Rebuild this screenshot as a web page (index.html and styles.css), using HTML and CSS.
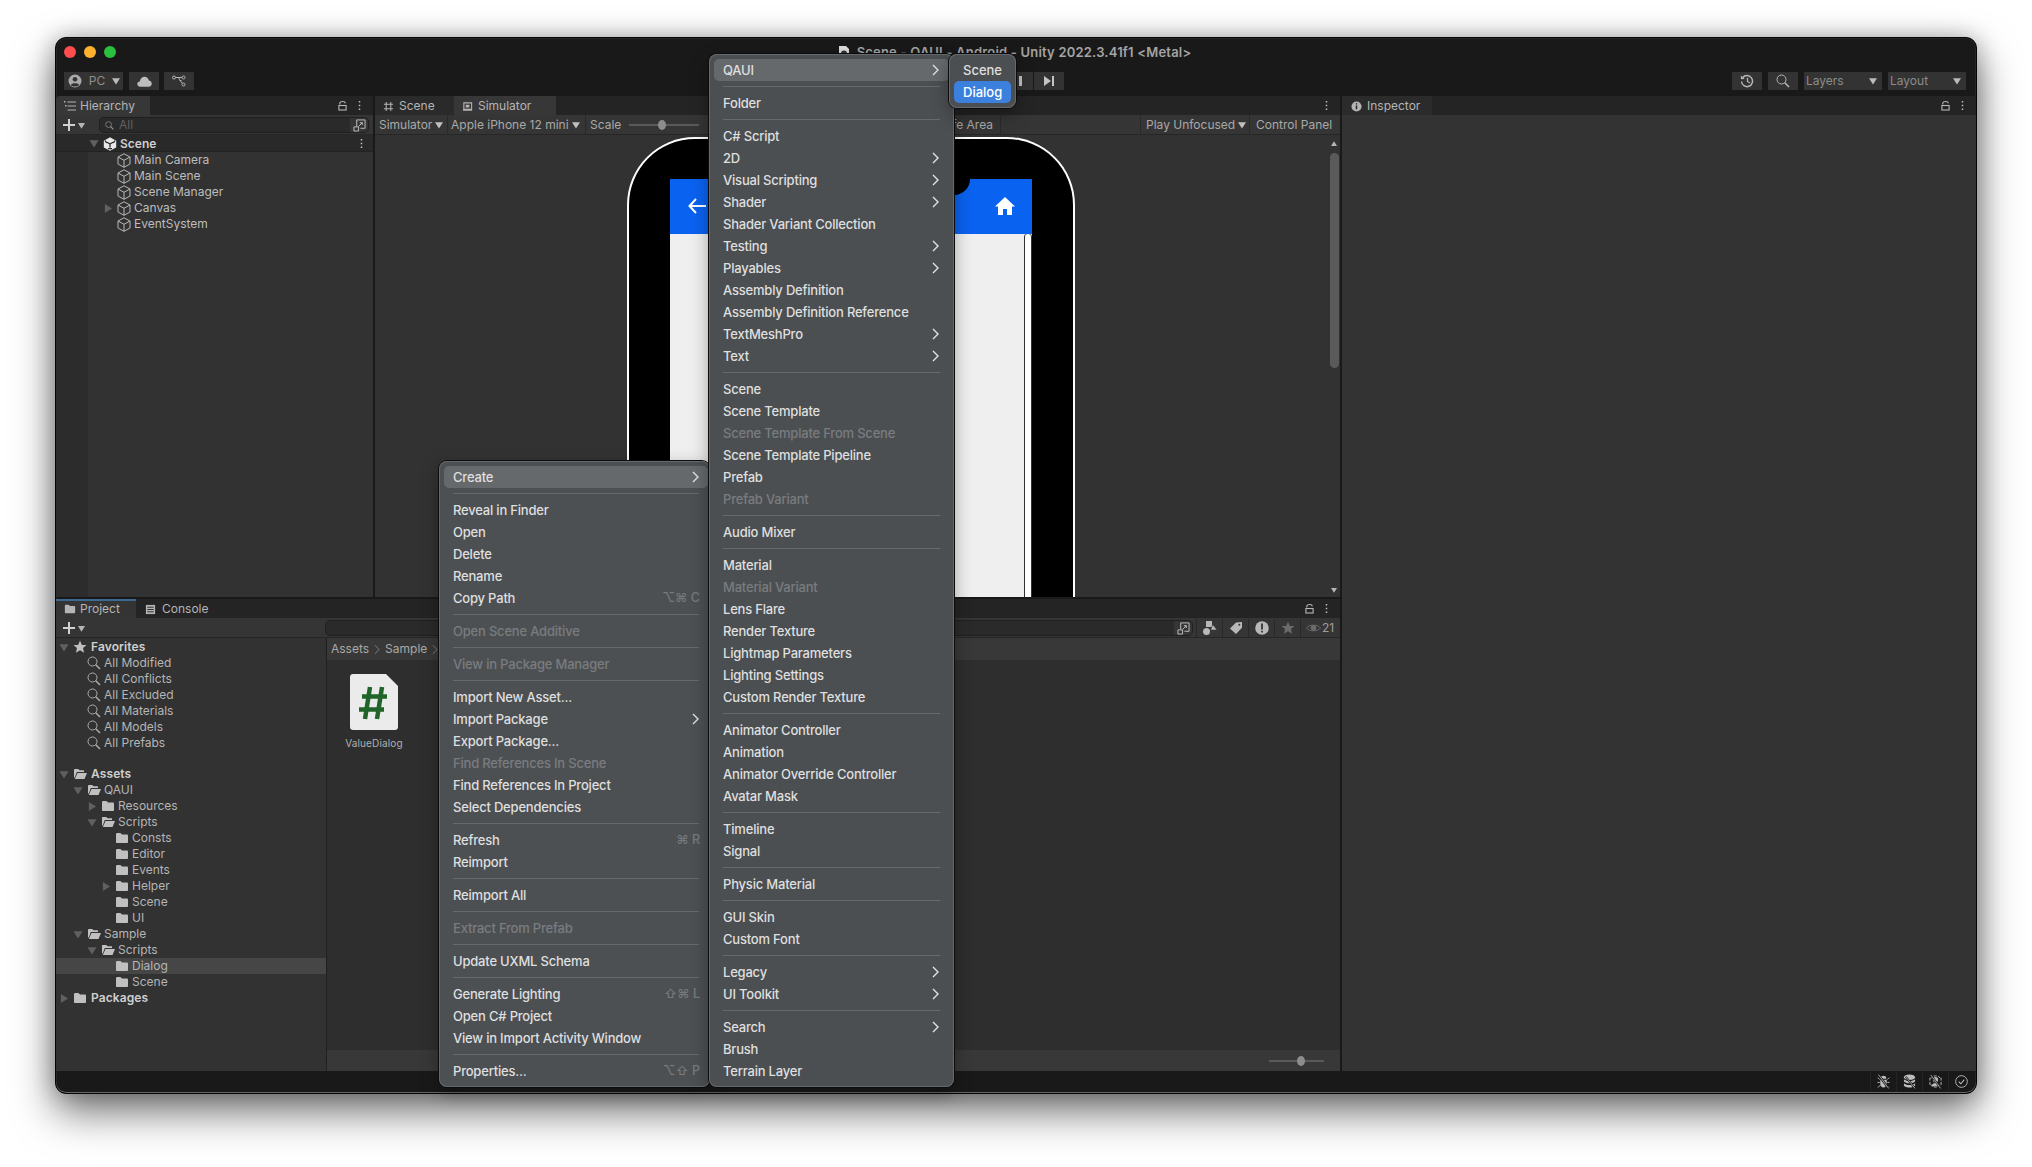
FILE: index.html
```html
<!DOCTYPE html>
<html lang="en">
<head>
<meta charset="utf-8">
<title>Unity</title>
<link rel="stylesheet" href="styles.css">
</head>
<body>
<svg class="defs" aria-hidden="true">
  <symbol id="cube" viewBox="0 0 14 15"><path d="M7 .8 13 4v7l-6 3.3L1 11V4zM1 4l6 3.3L13 4M7 7.3v7" fill="none" stroke="currentColor"/></symbol>
  <symbol id="unity" viewBox="0 0 14 14"><path d="M7 .3 13.2 3.8v6.6L7 13.8.8 10.4V3.8z" fill="currentColor"/><path d="M7 7V10.5M7 7 4 5.2M7 7l3-1.8M2.2 3.6 3.6 6M11.8 3.6 10.4 6M5 11.6h4" stroke="#2a2a2a" stroke-width="1.3" fill="none"/></symbol>
  <symbol id="folder" viewBox="0 0 14 14"><path d="M1 3.3C1 2.6 1.5 2 2.2 2H5.400L7 3.500H11.800C12.500 3.500 13 4 13 4.700V11C13 11.600 12.500 12 12 12H2C1.400 12 1 11.600 1 11z" fill="currentColor"/></symbol>
  <symbol id="folder-open" viewBox="0 0 14 14"><path d="M1 3C1 2.400 1.400 2 2 2H5.200L6.600 3.200H11V5H3.800L1.800 10.500 1 10.500z" fill="currentColor"/><path d="M4.500 6H14L11.500 12H1.800z" fill="currentColor"/></symbol>
  <symbol id="search" viewBox="0 0 14 14"><circle cx="5.500" cy="5.500" r="4.500" fill="none" stroke="currentColor"/><path d="M8.800 8.800 13 13" stroke="currentColor" stroke-width="1.600"/></symbol>
  <symbol id="tri-d" viewBox="0 0 10 10"><path d="M0 1.500h10L5 9.500z" fill="currentColor"/></symbol>
  <symbol id="tri-r" viewBox="0 0 10 10"><path d="M1.500 0v10l8-5z" fill="currentColor"/></symbol>
  <symbol id="star" viewBox="0 0 14 14"><path d="M7 .8 8.900 5h4.600L10 8l1.100 4.800L7 10.300l-4.100 2.500L4 8 .5 5h4.600z" fill="currentColor"/></symbol>
  <symbol id="plus" viewBox="0 0 12 12"><path d="M6 0v12M0 6h12" stroke="currentColor" stroke-width="2"/></symbol>
  <symbol id="lock" viewBox="0 0 10 12"><path d="M2 5V3.500C2 1 8 1 8 3.500" fill="none" stroke="currentColor" stroke-width="1.200"/><rect x="1" y="6" width="8" height="5" fill="none" stroke="currentColor" stroke-width="1.200"/></symbol>
  <symbol id="dots" viewBox="0 0 4 12"><path d="M1 0h2v2H1zM1 5h2v2H1zM1 10h2v2H1z" fill="currentColor"/></symbol>
  <symbol id="list" viewBox="0 0 14 12"><path d="M4.500 2H13M4.500 6H13M4.500 10H13" stroke="currentColor"/><path d="M1 1h1.500v1.500H1zM2 5h1.500v1.500H2z" fill="currentColor"/></symbol>
  <symbol id="hash" viewBox="0 0 12 12"><path d="M3.500 1v10M8.500 1v10M1 3.500h10M1 8.500h10" stroke="currentColor" stroke-width="1.100"/></symbol>
  <symbol id="phone" viewBox="0 0 12 12"><path d="M2 2h8.500v7H2zM1 10h10" fill="none" stroke="currentColor" stroke-width="1.200"/><path d="M4 4h4v3H4z" fill="currentColor"/></symbol>
  <symbol id="console" viewBox="0 0 12 12"><path d="M1 1h10v10H1z" fill="currentColor"/><path d="M2.500 3.500h7M2.500 6h7M2.500 8.500h7" stroke="#232323"/></symbol>
  <symbol id="info" viewBox="0 0 12 12"><circle cx="6" cy="6" r="5.500" fill="currentColor"/><path d="M6 5v4M6 2.500v1.300" stroke="#252525" stroke-width="1.600"/></symbol>
  <symbol id="expand" viewBox="0 0 14 14"><path d="M4 8V1h9v9H8" fill="none" stroke="currentColor"/><path d="M1 8.500h5v4.500H1z" fill="none" stroke="currentColor"/><path d="M6 8 10 4M7.500 4H10v2.500" fill="none" stroke="currentColor"/></symbol>
  <symbol id="user" viewBox="0 0 14 14"><circle cx="7" cy="7" r="6.500" fill="currentColor"/><circle cx="7" cy="5.300" r="2.300" fill="#333"/><path d="M2.800 11C3.500 8.600 10.500 8.600 11.200 11 9 13 5 13 2.800 11z" fill="#333"/></symbol>
  <symbol id="cloud" viewBox="0 0 16 11"><path d="M3.500 11C1.500 11 .3 9.700.3 8.200.3 6.600 1.500 5.600 3 5.500 3.500 2.500 5.500.5 8 .5c2.600 0 4.300 1.900 4.600 4 1.900 0 3.100 1.600 3.100 3.300 0 1.700-1.300 3.200-3.200 3.200z" fill="currentColor"/></symbol>
  <symbol id="graph" viewBox="0 0 14 12"><circle cx="2" cy="2.500" r="1.500" fill="none" stroke="currentColor"/><circle cx="11.500" cy="2.500" r="1.500" fill="none" stroke="currentColor"/><circle cx="11.500" cy="9.500" r="1.500" fill="none" stroke="currentColor"/><path d="M3.500 2.500 6 2.500C7 2.500 7.500 5 8 5.500H9.500M5.500 2.500h4.500M8 5.500l2.500 3" fill="none" stroke="currentColor"/></symbol>
  <symbol id="history" viewBox="0 0 14 14"><path d="M2.600 3.800A5.500 5.500 0 1 1 1.500 7.500" fill="none" stroke="currentColor" stroke-width="1.500"/><path d="M.8 1.500 1 5.300 4.800 5z" fill="currentColor"/><path d="M7.500 3.800v3.700l2.500 1.500" fill="none" stroke="currentColor" stroke-width="1.300"/></symbol>
  <symbol id="step" viewBox="0 0 12 10"><path d="M1 0v10l7-5zM9 0h2v10H9z" fill="currentColor"/></symbol>
  <symbol id="play" viewBox="0 0 12 10"><path d="M2 0v10l8-5z" fill="currentColor"/></symbol>
  <symbol id="pause" viewBox="0 0 12 10"><path d="M2 0h3v10H2zM7 0h3v10H7z" fill="currentColor"/></symbol>
  <symbol id="chev" viewBox="0 0 7 12"><path d="M1 1l5 5-5 5" fill="none" stroke="currentColor" stroke-width="1.400"/></symbol>
  <symbol id="crumb" viewBox="0 0 7 12"><path d="M1 1l5 5-5 5" fill="none" stroke="currentColor" stroke-width="1"/></symbol>
  <symbol id="types" viewBox="0 0 14 14"><path d="M3 0h6v6H3z" fill="currentColor"/><circle cx="3.500" cy="10.500" r="3.500" fill="currentColor"/><path d="M9.800 3.500 14 9H7.600z" fill="currentColor" stroke="#353535" stroke-width=".6"/></symbol>
  <symbol id="tag" viewBox="0 0 14 14"><path d="M1 7.500 7 1.500 13 1v5.800L7 13z" fill="currentColor"/><circle cx="10.300" cy="3.800" r="1" fill="#353535"/></symbol>
  <symbol id="warn" viewBox="0 0 14 14"><circle cx="7" cy="7" r="6.800" fill="currentColor"/><path d="M7 2.500v6M7 9.800v1.800" stroke="#353535" stroke-width="1.800"/></symbol>
  <symbol id="eye" viewBox="0 0 16 10"><path d="M.5 5C3 1 13 1 15.500 5 13 9 3 9 .5 5z" fill="none" stroke="currentColor"/><circle cx="8" cy="4.800" r="3" fill="currentColor"/></symbol>
  <symbol id="bug" viewBox="0 0 14 16"><path d="M4 4.500C4 1 10 1 10 4.500V5H4zM3.500 6h7V11C10.500 15.500 3.500 15.500 3.500 11z" fill="currentColor"/><path d="M3 6 .8 3.800M11 6l2.200-2.200M3 9H.5M11 9h2.500M3.500 12 1 14.500M10.500 12 13 14.500" fill="none" stroke="currentColor"/><path d="M1.500 .5 12.500 15.500" stroke="#191919" stroke-width="2.400"/><path d="M1.500 .5 12.500 15.500" stroke="currentColor" stroke-width=".9"/></symbol>
  <symbol id="db" viewBox="0 0 14 16"><ellipse cx="7" cy="3.500" rx="6" ry="3" fill="currentColor"/><path d="M1 5.500C3 8 11 8 13 5.500V8C11 10.500 3 10.500 1 8zM1 10C3 12.500 11 12.500 13 10V12.500C11 15 3 15 1 12.500z" fill="currentColor"/><path d="M3 3 13 15.500" stroke="#191919" stroke-width="2.200"/><path d="M3 3 13 15.500" stroke="currentColor" stroke-width=".9"/></symbol>
  <symbol id="target" viewBox="0 0 14 16"><path d="M2 5C2 1 12 1 12 5M2 11C2 15 12 15 12 11M1 4v8M13 4v8" fill="none" stroke="currentColor" stroke-dasharray="3 1.500"/><circle cx="7" cy="6" r="2.800" fill="currentColor"/><path d="M3 13C3 8.500 11 8.500 11 13z" fill="currentColor"/><path d="M2 1 12.500 15.500" stroke="#191919" stroke-width="2.200"/><path d="M2 1 12.500 15.500" stroke="currentColor" stroke-width=".9"/></symbol>
  <symbol id="check" viewBox="0 0 14 14"><circle cx="7" cy="7" r="6.300" fill="none" stroke="currentColor"/><path d="M4 7.200 6.300 9.500 10 5" fill="none" stroke="currentColor" stroke-width="1.100"/></symbol>
  <symbol id="doc" viewBox="0 0 12 14"><path d="M1 1h7l3 3v9H1z" fill="currentColor"/><circle cx="6" cy="8.500" r="3" fill="#333"/></symbol>
  <symbol id="back" viewBox="0 0 18 16"><path d="M8 1 1.500 8 8 15M2 8h16" fill="none" stroke="currentColor" stroke-width="2"/></symbol>
  <symbol id="home" viewBox="0 0 20 18"><path d="M10 0 20 9.500H17V18H12V12H8V18H3V9.500H0z" fill="currentColor"/></symbol>
  <symbol id="hashbig" viewBox="0 0 28 34"><path d="M11 1 6 33M23 1 18 33M3 10.500H28M0 23.500H25" fill="none" stroke="currentColor" stroke-width="4.500"/></symbol>
  <symbol id="file" viewBox="0 0 48 56"><path d="M3 0H36L48 12V53C48 54.700 46.700 56 45 56H3C1.300 56 0 54.700 0 53V3C0 1.300 1.300 0 3 0z" fill="currentColor"/></symbol>
</svg>

<div class="window">
  <header class="titlebar">
    <div class="lights"><span class="light red"></span><span class="light amber"></span><span class="light green"></span></div>
    <div class="title"><svg class="ic-doc"><use href="#doc"/></svg><span>Scene - QAUI - Android - Unity 2022.3.41f1 &lt;Metal&gt;</span></div>
    <div></div>
  </header>

  <div class="toolbar">
    <div class="tb-left">
      <div class="tb-btn pc"><svg class="ic14"><use href="#user"/></svg><span>PC</span><svg class="caret"><use href="#tri-d"/></svg></div>
      <div class="tb-btn sq"><svg class="ic-cloud"><use href="#cloud"/></svg></div>
      <div class="tb-btn sq"><svg class="ic-graph"><use href="#graph"/></svg></div>
    </div>
    <div class="tb-center">
      <div class="tb-btn sq"><svg class="ic-play"><use href="#play"/></svg></div>
      <div class="tb-btn sq"><svg class="ic-play"><use href="#pause"/></svg></div>
      <div class="tb-btn sq"><svg class="ic-play"><use href="#step"/></svg></div>
    </div>
    <div class="tb-right">
      <div class="tb-btn sq"><svg class="ic14"><use href="#history"/></svg></div>
      <div class="tb-btn sq"><svg class="ic14"><use href="#search"/></svg></div>
      <div class="tb-btn drop"><span>Layers</span><svg class="caret"><use href="#tri-d"/></svg></div>
      <div class="tb-btn drop"><span>Layout</span><svg class="caret"><use href="#tri-d"/></svg></div>
    </div>
  </div>

  <main class="panels">
    <section class="panel hierarchy">
      <div class="tabbar">
        <div class="tab active w-hier"><svg class="ic-tab"><use href="#list"/></svg><span>Hierarchy</span></div>
        <div class="tab-actions"><svg class="ic-lock"><use href="#lock"/></svg><svg class="ic-dots"><use href="#dots"/></svg></div>
      </div>
      <div class="paneltools">
        <svg class="ic-plus"><use href="#plus"/></svg><svg class="caret-s"><use href="#tri-d"/></svg>
        <div class="field hier-field"><svg class="ic-s"><use href="#search"/></svg><span class="ph">All</span><span class="field-end"><svg class="ic14"><use href="#expand"/></svg></span></div>
      </div>
      <div class="tree hier-tree">
        <div class="row scene-row"><svg class="arrow"><use href="#tri-d"/></svg><svg class="ic14 ic-unity"><use href="#unity"/></svg><span class="rowname strong">Scene</span><svg class="ic-dots row-dots"><use href="#dots"/></svg></div>
        <div class="row go"><span class="arrow-slot"></span><svg class="ic-cube"><use href="#cube"/></svg><span>Main Camera</span></div>
        <div class="row go"><span class="arrow-slot"></span><svg class="ic-cube"><use href="#cube"/></svg><span>Main Scene</span></div>
        <div class="row go"><span class="arrow-slot"></span><svg class="ic-cube"><use href="#cube"/></svg><span>Scene Manager</span></div>
        <div class="row go"><svg class="arrow"><use href="#tri-r"/></svg><svg class="ic-cube"><use href="#cube"/></svg><span>Canvas</span></div>
        <div class="row go"><span class="arrow-slot"></span><svg class="ic-cube"><use href="#cube"/></svg><span>EventSystem</span></div>
      </div>
    </section>

    <section class="panel sceneview">
      <div class="tabbar">
        <div class="tab inactive w-scene"><svg class="ic-tab12"><use href="#hash"/></svg><span>Scene</span></div>
        <div class="tab active w-sim"><svg class="ic-tab12"><use href="#phone"/></svg><span>Simulator</span></div>
        <div class="tab-actions"><svg class="ic-dots"><use href="#dots"/></svg></div>
      </div>
      <div class="scene-tools">
        <div class="cell c-sim"><span>Simulator</span><svg class="caret-t"><use href="#tri-d"/></svg></div>
        <div class="cell c-dev"><span>Apple iPhone 12 mini</span><svg class="caret-t"><use href="#tri-d"/></svg></div>
        <div class="cell c-scale"><span>Scale</span><div class="slider scale-slider"><i></i></div></div>
        <div class="cell c-safe"><span>Safe Area</span></div>
        <div class="spacer"></div>
        <div class="cell c-play"><span>Play Unfocused</span><svg class="caret-t"><use href="#tri-d"/></svg></div>
        <div class="cell c-ctrl"><span>Control Panel</span></div>
      </div>
      <div class="viewport">
        <div class="canvas">
          <div class="device">
            <div class="screen">
              <div class="app-head">
                <svg class="ic-back"><use href="#back"/></svg>
                <div class="notch"></div>
                <svg class="ic-home"><use href="#home"/></svg>
              </div>
              <div class="app-body"><div class="app-scroll"></div></div>
            </div>
          </div>
        </div>
        <div class="vscroll"><svg class="sb-arrow sb-up"><use href="#tri-d"/></svg><div class="sb-track"><div class="sb-thumb"></div></div><svg class="sb-arrow sb-down"><use href="#tri-d"/></svg></div>
      </div>
    </section>

    <section class="panel inspector">
      <div class="tabbar">
        <div class="tab active w-insp"><svg class="ic-tab12"><use href="#info"/></svg><span>Inspector</span></div>
        <div class="tab-actions"><svg class="ic-lock"><use href="#lock"/></svg><svg class="ic-dots"><use href="#dots"/></svg></div>
      </div>
    </section>

    <section class="panel project">
      <div class="tabbar">
        <div class="tab active proj-tab w-proj"><svg class="ic-tab"><use href="#folder"/></svg><span>Project</span></div>
        <div class="tab w-cons"><svg class="ic-tab12"><use href="#console"/></svg><span>Console</span></div>
        <div class="tab-actions"><svg class="ic-lock"><use href="#lock"/></svg><svg class="ic-dots"><use href="#dots"/></svg></div>
      </div>
      <div class="paneltools proj-tools">
        <svg class="ic-plus"><use href="#plus"/></svg><svg class="caret-s"><use href="#tri-d"/></svg>
        <div class="field proj-field"><span class="field-end"><svg class="ic14"><use href="#expand"/></svg></span></div>
        <div class="tool"><svg class="ic14"><use href="#types"/></svg></div>
        <div class="tool"><svg class="ic14"><use href="#tag"/></svg></div>
        <div class="tool"><svg class="ic14"><use href="#warn"/></svg></div>
        <div class="tool dim"><svg class="ic14"><use href="#star"/></svg></div>
        <div class="tool eye"><svg class="ic-eye"><use href="#eye"/></svg><span>21</span></div>
      </div>
      <div class="proj-body">
        <div class="tree proj-tree">
          <div class="row d0 strong"><svg class="arrow"><use href="#tri-d"/></svg><svg class="ic14"><use href="#star"/></svg><span>Favorites</span></div>
          <div class="row d1"><span class="arrow-slot"></span><svg class="ic14 thin"><use href="#search"/></svg><span>All Modified</span></div>
          <div class="row d1"><span class="arrow-slot"></span><svg class="ic14 thin"><use href="#search"/></svg><span>All Conflicts</span></div>
          <div class="row d1"><span class="arrow-slot"></span><svg class="ic14 thin"><use href="#search"/></svg><span>All Excluded</span></div>
          <div class="row d1"><span class="arrow-slot"></span><svg class="ic14 thin"><use href="#search"/></svg><span>All Materials</span></div>
          <div class="row d1"><span class="arrow-slot"></span><svg class="ic14 thin"><use href="#search"/></svg><span>All Models</span></div>
          <div class="row d1"><span class="arrow-slot"></span><svg class="ic14 thin"><use href="#search"/></svg><span>All Prefabs</span></div>
          <div class="tree-gap"></div>
          <div class="row d0 strong"><svg class="arrow"><use href="#tri-d"/></svg><svg class="ic14"><use href="#folder-open"/></svg><span>Assets</span></div>
          <div class="row d1"><svg class="arrow"><use href="#tri-d"/></svg><svg class="ic14"><use href="#folder-open"/></svg><span>QAUI</span></div>
          <div class="row d2"><svg class="arrow"><use href="#tri-r"/></svg><svg class="ic14"><use href="#folder"/></svg><span>Resources</span></div>
          <div class="row d2"><svg class="arrow"><use href="#tri-d"/></svg><svg class="ic14"><use href="#folder-open"/></svg><span>Scripts</span></div>
          <div class="row d3"><span class="arrow-slot"></span><svg class="ic14"><use href="#folder"/></svg><span>Consts</span></div>
          <div class="row d3"><span class="arrow-slot"></span><svg class="ic14"><use href="#folder"/></svg><span>Editor</span></div>
          <div class="row d3"><span class="arrow-slot"></span><svg class="ic14"><use href="#folder"/></svg><span>Events</span></div>
          <div class="row d3"><svg class="arrow"><use href="#tri-r"/></svg><svg class="ic14"><use href="#folder"/></svg><span>Helper</span></div>
          <div class="row d3"><span class="arrow-slot"></span><svg class="ic14"><use href="#folder"/></svg><span>Scene</span></div>
          <div class="row d3"><span class="arrow-slot"></span><svg class="ic14"><use href="#folder"/></svg><span>UI</span></div>
          <div class="row d1"><svg class="arrow"><use href="#tri-d"/></svg><svg class="ic14"><use href="#folder-open"/></svg><span>Sample</span></div>
          <div class="row d2"><svg class="arrow"><use href="#tri-d"/></svg><svg class="ic14"><use href="#folder-open"/></svg><span>Scripts</span></div>
          <div class="row d3 selected"><span class="arrow-slot"></span><svg class="ic14"><use href="#folder"/></svg><span>Dialog</span></div>
          <div class="row d3"><span class="arrow-slot"></span><svg class="ic14"><use href="#folder"/></svg><span>Scene</span></div>
          <div class="row d0 strong"><svg class="arrow"><use href="#tri-r"/></svg><svg class="ic14"><use href="#folder"/></svg><span>Packages</span></div>
        </div>
        <div class="assets">
          <div class="crumbs"><span>Assets</span><svg class="ic-crumb"><use href="#crumb"/></svg><span>Sample</span><svg class="ic-crumb"><use href="#crumb"/></svg><span>Scripts</span></div>
          <div class="grid-area">
            <div class="asset">
              <div class="asset-icon"><svg class="ic-file"><use href="#file"/></svg><svg class="ic-hash"><use href="#hashbig"/></svg></div>
              <span class="asset-name">ValueDialog</span>
            </div>
          </div>
          <div class="assets-foot"><div class="slider foot-slider"><i></i></div></div>
        </div>
      </div>
    </section>
  </main>

  <footer class="statusbar">
    <span class="st"><svg class="ic-st"><use href="#bug"/></svg></span>
    <span class="st"><svg class="ic-st"><use href="#db"/></svg></span>
    <span class="st"><svg class="ic-st"><use href="#target"/></svg></span>
    <span class="st"><svg class="ic-st"><use href="#check"/></svg></span>
  </footer>
</div>

<nav class="menu menu-a">
  <div class="mi hover"><span>Create</span><svg class="chev"><use href="#chev"/></svg></div>
  <div class="sep"></div>
  <div class="mi">Reveal in Finder</div>
  <div class="mi">Open</div>
  <div class="mi">Delete</div>
  <div class="mi">Rename</div>
  <div class="mi"><span>Copy Path</span><span class="sc">⌥⌘ C</span></div>
  <div class="sep"></div>
  <div class="mi off">Open Scene Additive</div>
  <div class="sep"></div>
  <div class="mi off">View in Package Manager</div>
  <div class="sep"></div>
  <div class="mi">Import New Asset...</div>
  <div class="mi"><span>Import Package</span><svg class="chev"><use href="#chev"/></svg></div>
  <div class="mi">Export Package...</div>
  <div class="mi off">Find References In Scene</div>
  <div class="mi">Find References In Project</div>
  <div class="mi">Select Dependencies</div>
  <div class="sep"></div>
  <div class="mi"><span>Refresh</span><span class="sc">⌘ R</span></div>
  <div class="mi">Reimport</div>
  <div class="sep"></div>
  <div class="mi">Reimport All</div>
  <div class="sep"></div>
  <div class="mi off">Extract From Prefab</div>
  <div class="sep"></div>
  <div class="mi">Update UXML Schema</div>
  <div class="sep"></div>
  <div class="mi"><span>Generate Lighting</span><span class="sc">⇧⌘ L</span></div>
  <div class="mi">Open C# Project</div>
  <div class="mi">View in Import Activity Window</div>
  <div class="sep"></div>
  <div class="mi"><span>Properties...</span><span class="sc">⌥⇧ P</span></div>
</nav>

<nav class="menu menu-b">
  <div class="mi hover"><span>QAUI</span><svg class="chev"><use href="#chev"/></svg></div>
  <div class="sep"></div>
  <div class="mi">Folder</div>
  <div class="sep"></div>
  <div class="mi">C# Script</div>
  <div class="mi"><span>2D</span><svg class="chev"><use href="#chev"/></svg></div>
  <div class="mi"><span>Visual Scripting</span><svg class="chev"><use href="#chev"/></svg></div>
  <div class="mi"><span>Shader</span><svg class="chev"><use href="#chev"/></svg></div>
  <div class="mi">Shader Variant Collection</div>
  <div class="mi"><span>Testing</span><svg class="chev"><use href="#chev"/></svg></div>
  <div class="mi"><span>Playables</span><svg class="chev"><use href="#chev"/></svg></div>
  <div class="mi">Assembly Definition</div>
  <div class="mi">Assembly Definition Reference</div>
  <div class="mi"><span>TextMeshPro</span><svg class="chev"><use href="#chev"/></svg></div>
  <div class="mi"><span>Text</span><svg class="chev"><use href="#chev"/></svg></div>
  <div class="sep"></div>
  <div class="mi">Scene</div>
  <div class="mi">Scene Template</div>
  <div class="mi off">Scene Template From Scene</div>
  <div class="mi">Scene Template Pipeline</div>
  <div class="mi">Prefab</div>
  <div class="mi off">Prefab Variant</div>
  <div class="sep"></div>
  <div class="mi">Audio Mixer</div>
  <div class="sep"></div>
  <div class="mi">Material</div>
  <div class="mi off">Material Variant</div>
  <div class="mi">Lens Flare</div>
  <div class="mi">Render Texture</div>
  <div class="mi">Lightmap Parameters</div>
  <div class="mi">Lighting Settings</div>
  <div class="mi">Custom Render Texture</div>
  <div class="sep"></div>
  <div class="mi">Animator Controller</div>
  <div class="mi">Animation</div>
  <div class="mi">Animator Override Controller</div>
  <div class="mi">Avatar Mask</div>
  <div class="sep"></div>
  <div class="mi">Timeline</div>
  <div class="mi">Signal</div>
  <div class="sep"></div>
  <div class="mi">Physic Material</div>
  <div class="sep"></div>
  <div class="mi">GUI Skin</div>
  <div class="mi">Custom Font</div>
  <div class="sep"></div>
  <div class="mi"><span>Legacy</span><svg class="chev"><use href="#chev"/></svg></div>
  <div class="mi"><span>UI Toolkit</span><svg class="chev"><use href="#chev"/></svg></div>
  <div class="sep"></div>
  <div class="mi"><span>Search</span><svg class="chev"><use href="#chev"/></svg></div>
  <div class="mi">Brush</div>
  <div class="mi">Terrain Layer</div>
</nav>

<nav class="menu menu-c">
  <div class="mi">Scene</div>
  <div class="mi picked">Dialog</div>
</nav>
</body>
</html>
```

FILE: styles.css
```css
* { box-sizing: border-box; }
html, body { margin: 0; background: #fff; }
body {
  width: 2032px; height: 1167px; overflow: hidden; position: relative;
  padding: 37px 0 0 55px;
  font: 12px/16px Inter, "DejaVu Sans", sans-serif;
  color: #bdbdbd;
}
svg { display: block; flex: none; }
.defs { position: absolute; width: 0; height: 0; }

.window {
  width: 1922px; height: 1057px;
  display: flex; flex-direction: column;
  background: #191919; border: 1px solid #050505; border-radius: 11px; overflow: hidden;
  box-shadow: 0 18px 42px rgba(0,0,0,.55), 0 0 22px rgba(0,0,0,.25), inset 0 0 0 1px rgba(255,255,255,.06), inset 0 -1px 0 rgba(255,255,255,.3);
}

.titlebar { height: 34px; display: grid; grid-template-columns: 1fr auto 1fr; align-items: center; flex: none; padding: 0 11px 6px 8px; }
.lights { display: flex; gap: 8px; }
.light { width: 12px; height: 12px; border-radius: 50%; }
.red { background: #fd4d4f; }
.amber { background: #feb02f; }
.green { background: #2bc13f; }
.title { display: flex; align-items: center; gap: 7px; font-size: 13px; font-weight: 600; letter-spacing: .2px; color: #a4a4a4; }
.ic-doc { width: 12px; height: 14px; color: #ddd; }

.toolbar { height: 24px; display: flex; flex: none; padding: 0 10px 6px 8px; color: #b5b5b5; }
.tb-left { width: 908px; display: flex; gap: 6px; }
.tb-left .sq + .sq { margin-left: -1px; }
.tb-center { width: 92px; display: flex; gap: 1px; }
.tb-right { flex: 1; display: flex; justify-content: flex-end; gap: 6px; }
.tb-btn { height: 18px; background: #333; display: flex; align-items: center; justify-content: center; }
.sq { width: 30px; }
.pc { width: 59px; padding: 0 4px 0 5px; gap: 7px; color: #a9a9a9; }
.pc span { flex: 1; font-size: 12px; color: #8f8f8f; }
.drop { width: 78px; justify-content: space-between; padding: 0 5px 0 2px; color: #8b8b8b; }
.caret { width: 8px; height: 8px; color: #bbb; }
.ic14 { width: 14px; height: 14px; }
.ic-cloud { width: 15px; height: 11px; color: #bdbdbd; }
.ic-graph { width: 14px; height: 12px; }
.ic-play { width: 12px; height: 10px; color: #c4c4c4; }

.panels {
  flex: 1; min-height: 0;
  display: grid; gap: 2px;
  grid-template-columns: 317px 965px 1fr;
  grid-template-rows: 501px 1fr;
}
.panel { background: #323232; display: flex; flex-direction: column; min-height: 0; min-width: 0; overflow: hidden; }
.hierarchy { grid-column: 1; grid-row: 1; border-radius: 4px 0 0 0; }
.sceneview { grid-column: 2; grid-row: 1; }
.inspector { grid-column: 3; grid-row: 1 / span 2; background: #333; }
.project { grid-column: 1 / span 2; grid-row: 2; }

.tabbar { height: 19px; flex: none; display: flex; align-items: stretch; background: #242424; }
.tab { display: flex; align-items: center; gap: 3px; padding: 1px 0 0 7px; color: #b4b4b4; }
.tab.active { background: #373737; }
.tab.inactive { background: #2a2a2a; }
.proj-tab { box-shadow: inset 0 2px 0 #3a6a94; background: #343434 !important; }
.w-hier { width: 94px; }
.w-scene { width: 79px; }
.w-sim { width: 102px; }
.w-insp { width: 90px; background: #2b2b2b !important; padding-left: 8px; gap: 3px; }
.w-proj { width: 80px; }
.w-cons { width: 76px; padding-left: 8px; gap: 4px; }
.ic-tab { width: 14px; height: 12px; }
.ic-tab12 { width: 11px; height: 11px; margin: 0 2px 0 1px; }
.tab-actions { margin-left: auto; display: flex; align-items: center; gap: 11px; padding-right: 12px; color: #b9b9b9; }
.ic-lock { width: 9px; height: 11px; }
.ic-dots { width: 3px; height: 11px; }

.paneltools { height: 20px; flex: none; display: flex; align-items: center; background: #353535; padding: 1px 0 0 7px; border-bottom: 1px solid #262626; }
.ic-plus { width: 12px; height: 12px; color: #d0d0d0; }
.caret-s { width: 7px; height: 7px; margin-left: 3px; color: #b5b5b5; }
.field { height: 16px; background: #2a2a2a; border: 1px solid #202020; border-radius: 5px; display: flex; align-items: center; overflow: hidden; }
.hier-field { margin-left: 14px; width: 270px; }
.ic-s { width: 9px; height: 9px; margin: 0 5px; color: #a0a0a0; }
.ph { color: #616161; }
.field-end { margin-left: auto; width: 18px; height: 100%; background: #353535; display: flex; align-items: center; justify-content: center; color: #c4c4c4; }
.field-end .ic14 { width: 13px; height: 13px; }

.tree { flex: 1; }
.hier-tree { background: linear-gradient(to right, #2c2c2c 32px, #323232 32px); }
.row { height: 16px; display: flex; align-items: center; white-space: nowrap; }
.arrow { width: 14px; height: 9px; color: #606060; }
.arrow-slot { width: 14px; flex: none; }
.scene-row { height: 17px; padding: 1px 0 0 31px; background: #292929; border-bottom: 1px solid #222; color: #d6d6d6; }
.ic-unity { margin-left: 2px; color: #e8e8e8; }
.rowname { margin-left: 3px; }
.strong { font-weight: 600; color: #cfcfcf; }
.row-dots { margin-left: auto; margin-right: 10px; color: #c4c4c4; }
.go { padding-left: 45px; }
.ic-cube { width: 14px; height: 15px; margin-left: 2px; margin-right: 3px; color: #b9b9b9; }

.scene-tools { height: 20px; flex: none; display: flex; background: #353535; border-bottom: 1px solid #262626; color: #a9a9a9; }
.cell { display: flex; align-items: center; padding: 1px 4px 0; gap: 3px; border-right: 1px solid #2a2a2a; white-space: nowrap; }
.caret-t { width: 8px; height: 8px; color: #c0c0c0; }
.c-sim { width: 73px; }
.c-dev { width: 138px; padding-left: 3px; }
.c-scale { width: 300px; padding-left: 4px; gap: 8px; border-right: 0; }
.c-safe { width: 115px; justify-content: flex-end; padding-right: 7px; }
.spacer { flex: 1; border-right: 1px solid #2a2a2a; }
.c-play { width: 109px; padding-left: 5px; }
.c-ctrl { width: 90px; padding-left: 6px; border-right: 0; }
.slider { height: 2px; background: #5a5a5a; position: relative; }
.slider i { position: absolute; top: -4px; width: 8px; height: 10px; border-radius: 50%; background: #8d8d8d; }
.scale-slider { width: 70px; }
.scale-slider i { left: 29px; }

.viewport { flex: 1; display: flex; min-height: 0; background: #323232; }
.canvas { flex: 1; overflow: hidden; padding: 2px 0 0 252px; }
.device { width: 448px; height: 560px; background: #000; border: 2px solid #fff; border-bottom: 0; border-radius: 68px 68px 0 0; padding: 40px 41px 0; }
.screen { height: 100%; display: flex; flex-direction: column; }
.app-head { height: 55px; flex: none; background: #0a62f0; color: #fff; display: flex; align-items: center; justify-content: space-between; padding: 0 17px 2px 18px; position: relative; }
.notch { position: absolute; left: 62px; top: 0; width: 238px; height: 16px; background: #000; border-radius: 0 0 24px 24px; }
.ic-back { width: 18px; height: 16px; }
.ic-home { width: 20px; height: 18px; }
.app-body { flex: 1; background: #efefef; display: flex; justify-content: flex-end; padding-right: 1px; }
.app-scroll { width: 6px; background: #fff; box-shadow: -1px 0 0 #333, 1px 0 0 #333; border-radius: 3px 3px 0 0; }
.vscroll { width: 12px; display: flex; flex-direction: column; align-items: center; }
.sb-arrow { width: 8px; height: 6px; flex: none; color: #b5b5b5; }
.sb-up { transform: scaleY(-1); margin: 6px 0; }
.sb-down { margin: 1px 0 4px; }
.sb-track { flex: 1; width: 9px; }
.sb-thumb { height: 215px; background: #5a5a5a; border-radius: 5px; }

.proj-tools { padding-right: 0; }
.proj-field { flex: 1; margin: 0 3px 0 240px; }
.tool { width: 26px; height: 100%; display: flex; align-items: center; justify-content: center; border-left: 1px solid #282828; color: #b8b8b8; }
.tool .ic14 { width: 14px; height: 14px; }
.dim { color: #6b6b6b; }
.eye { width: 40px; gap: 1px; color: #6c6c6c; justify-content: flex-start; padding-left: 5px; }
.eye span { color: #9d9d9d; }
.ic-eye { width: 15px; height: 10px; }

.proj-body { flex: 1; display: flex; min-height: 0; }
.proj-tree { width: 271px; flex: none; padding-top: 1px; border-right: 1px solid #202020; color: #b5b5b5; }
.tree-gap { height: 15px; }
.proj-tree .row .ic14 { margin: 0 3px 0 2px; color: #c0c0c0; }
.proj-tree .thin { color: #aaa !important; }
.proj-tree .strong span { margin-left: 1px; letter-spacing: .1px; }
.d0 { padding-left: 1px; }
.d1 { padding-left: 15px; }
.d2 { padding-left: 29px; }
.d3 { padding-left: 43px; }
.selected { background: #464646; }
.assets { flex: 1; display: flex; flex-direction: column; min-width: 0; background: #2e2e2e; }
.crumbs { height: 22px; flex: none; display: flex; align-items: center; gap: 5px; padding-left: 4px; background: #383838; color: #a8a8a8; }
.ic-crumb { width: 6px; height: 11px; color: #8a8a8a; }
.grid-area { flex: 1; padding: 14px 0 0 7px; }
.asset { width: 80px; display: flex; flex-direction: column; align-items: center; }
.asset-icon { width: 48px; height: 56px; position: relative; color: #ebebeb; }
.ic-file { width: 48px; height: 56px; }
.ic-hash { position: absolute; left: 9px; top: 12px; width: 28px; height: 34px; color: #21642a; }
.asset-name { font-size: 10px; line-height: 12px; margin-top: 7px; color: #b0b0b0; letter-spacing: .15px; }
.assets-foot { height: 21px; flex: none; background: #383838; display: flex; align-items: center; justify-content: flex-end; padding-right: 16px; }
.foot-slider { width: 55px; }
.foot-slider i { left: 28px; }

.statusbar { height: 22px; flex: none; display: flex; justify-content: flex-end; align-items: center; padding: 0 2px 1px 0; color: #bdbdbd; }
.st { width: 26px; height: 21px; display: flex; align-items: center; justify-content: center; border-left: 1px solid #242424; }
.ic-st { width: 13px; height: 15px; }

.menu {
  position: absolute; top: 54px;
  background: #4c4f52;
  border-radius: 8px;
  padding: 5px;
  font: 500 13px/22px Inter, "DejaVu Sans", sans-serif;
  letter-spacing: -.2px;
  color: #dfdfdf;
  box-shadow: 0 0 0 1px #0c0c0c, inset 0 0 0 1px #66696b, 0 6px 18px rgba(0,0,0,.35);
}
.menu-a { left: 439px; top: 461px; width: 271px; height: 626px; padding-right: 2px; background: #4d5053; }
.menu-a .chev { margin-right: 0; }
.menu-b { left: 709px; width: 245px; height: 1033px; }
.menu-c { left: 949px; width: 67px; height: 54px; letter-spacing: 0; }
.mi { height: 22px; display: flex; align-items: center; justify-content: space-between; padding: 0 9px; white-space: nowrap; border-radius: 5px; }
.menu-c .mi { padding: 0 9px; justify-content: flex-start; }
.hover { background: #66696c; }
.picked { background: #3a80dc; color: #fff; }
.off { color: #797c7f; }
.sep { height: 1px; margin: 5px 9px; background: #67696b; }
.sc { color: #777a7d; font-size: 12.5px; letter-spacing: 0; margin-right: -1px; }
.chev { width: 7px; height: 12px; margin-right: 1px; color: #e2e2e2; }
```
